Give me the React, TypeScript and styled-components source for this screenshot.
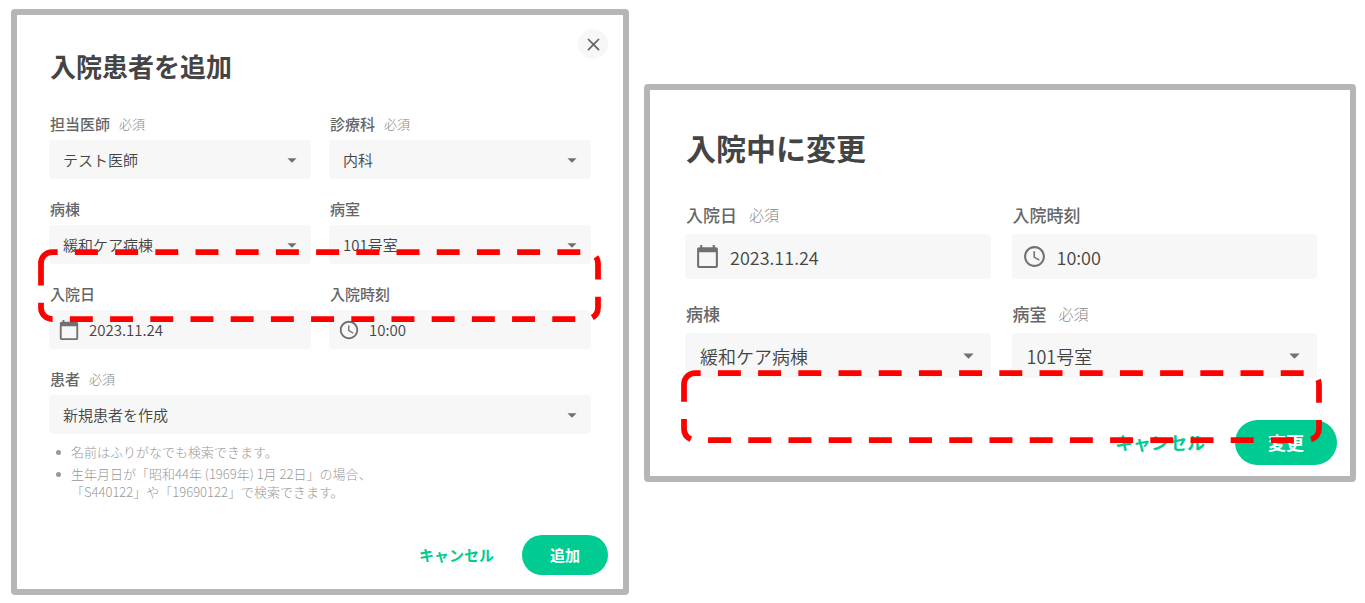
import React, { useId } from "react";
import styled, { createGlobalStyle, css } from "styled-components";
import { MdAccessTime, MdArrowDropDown, MdCalendarToday, MdClose } from "react-icons/md";

const GlobalStyle = createGlobalStyle`
  *, *::before, *::after { box-sizing: border-box; }
  body {
    margin: 0;
    background: #ffffff;
    color: #444444;
    font-family: "Noto Sans CJK JP", "Noto Sans", sans-serif;
  }
  button, input, select { font: inherit; color: inherit; }
`;

type Size = "regular" | "large";

const metrics = {
  regular: {
    title: 26, titleLine: 38, titleGap: 29,
    label: 15, labelLine: 20, labelGap: 6, note: 13, noteGap: 9,
    text: 15, field: 39, inset: 14, iconInset: 9, icon: 22, iconGap: 9, arrowInset: 8,
    rowGap: 20, columnGap: 18,
    button: 40, buttonPad: 28, buttonGap: 28,
    padding: "32px 32px 0",
  },
  large: {
    title: 30, titleLine: 44, titleGap: 34,
    label: 17, labelLine: 24, labelGap: 7, note: 15, noteGap: 12,
    text: 18, field: 45, inset: 15, iconInset: 10, icon: 25, iconGap: 10, arrowInset: 10,
    rowGap: 23, columnGap: 21,
    button: 45, buttonPad: 33, buttonGap: 30,
    padding: "35px 33px 0 35px",
  },
};

interface Sized { $size: Size }

const Page = styled.main`
  display: grid;
  grid-template-columns: 618fr 712fr;
  column-gap: 15px;
  align-items: start;
  padding: 9px 9px 8px 11px;
`;

const Dialog = styled.section<{ $drop?: number }>`
  position: relative;
  margin-top: ${(p) => p.$drop ?? 0}px;
  border: 6px solid #b6b6b6;
  border-radius: 4px;
  background: #ffffff;
`;

const Body = styled.div<Sized>`
  padding: ${(p) => metrics[p.$size].padding};
`;

const Title = styled.h2<Sized>`
  margin: 0 0 ${(p) => metrics[p.$size].titleGap}px;
  padding-left: 1px;
  font-size: ${(p) => metrics[p.$size].title}px;
  line-height: ${(p) => metrics[p.$size].titleLine}px;
  font-weight: 700;
`;

const CloseButton = styled.button`
  position: absolute;
  top: 14px;
  right: 15px;
  display: grid;
  place-items: center;
  width: 30px;
  height: 30px;
  padding: 0;
  border: 0;
  border-radius: 50%;
  background: #f7f7f7;
  color: #666666;
  font-size: 21px;
`;

const Fields = styled.div<Sized>`
  display: grid;
  grid-template-columns: 1fr 1fr;
  gap: ${(p) => metrics[p.$size].rowGap}px ${(p) => metrics[p.$size].columnGap}px;
`;

const Field = styled.div<{ $wide?: boolean }>`
  min-width: 0;
  ${(p) => p.$wide && css`grid-column: 1 / -1;`}
`;

const LabelRow = styled.div<Sized>`
  display: flex;
  align-items: center;
  gap: ${(p) => metrics[p.$size].noteGap}px;
  height: ${(p) => metrics[p.$size].labelLine}px;
  margin-bottom: ${(p) => metrics[p.$size].labelGap}px;
  padding-left: 1px;
`;

const Label = styled.label<Sized>`
  color: #666666;
  font-size: ${(p) => metrics[p.$size].label}px;
  line-height: ${(p) => metrics[p.$size].labelLine}px;
  font-weight: 500;
`;

const Required = styled.span<Sized>`
  color: #888888;
  font-size: ${(p) => metrics[p.$size].note}px;
  line-height: ${(p) => metrics[p.$size].labelLine}px;
  font-weight: 300;
`;

const Control = styled.div<Sized & { $icon?: boolean }>`
  position: relative;
  display: flex;
  align-items: center;
  gap: ${(p) => metrics[p.$size].iconGap}px;
  height: ${(p) => metrics[p.$size].field}px;
  padding-left: ${(p) => (p.$icon ? metrics[p.$size].iconInset : 0)}px;
  border-radius: 4px;
  background: #f7f7f7;
  color: #444444;
  font-size: ${(p) => metrics[p.$size].text}px;
  font-weight: 350;

  svg {
    flex: none;
    width: ${(p) => metrics[p.$size].icon}px;
    height: ${(p) => metrics[p.$size].icon}px;
    color: #707070;
  }
`;

const Select = styled.select<Sized>`
  width: 100%;
  height: 100%;
  padding: 0 40px 0 ${(p) => metrics[p.$size].inset}px;
  border: 0;
  background: transparent;
  appearance: none;
`;

const Arrow = styled(MdArrowDropDown)<Sized>`
  position: absolute;
  right: ${(p) => metrics[p.$size].arrowInset}px;
  pointer-events: none;
`;

const Input = styled.input`
  flex: 1;
  min-width: 0;
  height: 100%;
  padding: 0;
  border: 0;
  background: transparent;
`;

const Hints = styled.ul`
  display: grid;
  gap: 4px;
  margin: 9px 0 0;
  padding: 0;
  list-style: none;
  color: #999999;
  font-size: 13px;
  line-height: 18px;
  font-weight: 300;
`;

const Hint = styled.li`
  display: flex;
  gap: 10px;
  padding-left: 7px;

  &::before {
    content: "";
    flex: none;
    width: 5px;
    height: 5px;
    margin-top: 7px;
    border-radius: 50%;
    background: #999999;
  }
`;

const Footer = styled.footer<Sized>`
  display: flex;
  justify-content: flex-end;
  align-items: center;
  gap: ${(p) => metrics[p.$size].buttonGap}px;
  padding: ${(p) => (p.$size === "regular" ? "34px 15px 14px" : "42px 13px 11px")};
  font-size: ${(p) => metrics[p.$size].text}px;
`;

const TextButton = styled.button<Sized>`
  height: ${(p) => metrics[p.$size].button}px;
  padding: 0 0 2px;
  border: 0;
  background: transparent;
  color: #00cc92;
  font-weight: 700;
`;

const PrimaryButton = styled(TextButton)`
  padding: 0 ${(p) => metrics[p.$size].buttonPad}px 2px;
  border-radius: 23px;
  background: #00cc92;
  color: #ffffff;
`;

const Marker = styled.svg<{ $top: number; $left: number; $right: number }>`
  position: absolute;
  top: ${(p) => p.$top}px;
  left: ${(p) => p.$left}px;
  width: calc(100% - ${(p) => p.$left + p.$right}px);
  pointer-events: none;
`;

/* Dashed outline that starts below its top-left corner and runs clockwise. */
function DashedOutline({ width, top, left, right }: { width: number; top: number; left: number; right: number }) {
  const far = width - 3;
  return (
    <Marker $top={top} $left={left} $right={right} viewBox={`0 0 ${width} 73`} aria-hidden="true">
      <path
        d={`M3 14.2A11.2 11.2 0 0 1 14.2 3H${far - 11.2}A11.2 11.2 0 0 1 ${far} 14.2V58.8A11.2 11.2 0 0 1 ${far - 11.2} 70H14.2A11.2 11.2 0 0 1 3 58.8Z`}
        fill="none"
        stroke="#ff0000"
        strokeWidth="5.75"
        strokeDasharray="22.95 17.25"
      />
    </Marker>
  );
}

interface FieldProps {
  size: Size;
  label: string;
  value: string;
  required?: boolean;
  wide?: boolean;
}

function FieldLabel({ id, size, label, required }: { id: string; size: Size; label: string; required?: boolean }) {
  return (
    <LabelRow $size={size}>
      <Label $size={size} htmlFor={id}>{label}</Label>
      {required && <Required $size={size}>必須</Required>}
    </LabelRow>
  );
}

function SelectField({ size, label, value, required, wide }: FieldProps) {
  const id = useId();
  return (
    <Field $wide={wide}>
      <FieldLabel id={id} size={size} label={label} required={required} />
      <Control $size={size}>
        <Select id={id} $size={size} defaultValue={value}>
          <option>{value}</option>
        </Select>
        <Arrow $size={size} aria-hidden="true" />
      </Control>
    </Field>
  );
}

function IconField({ size, label, value, required, icon }: FieldProps & { icon: React.ReactNode }) {
  const id = useId();
  return (
    <Field>
      <FieldLabel id={id} size={size} label={label} required={required} />
      <Control $size={size} $icon>
        {icon}
        <Input id={id} type="text" defaultValue={value} />
      </Control>
    </Field>
  );
}

export default function App() {
  return (
    <>
      <GlobalStyle />
      <Page>
        <Dialog aria-label="入院患者を追加">
          <CloseButton type="button" aria-label="閉じる"><MdClose /></CloseButton>
          <Body $size="regular">
            <Title $size="regular">入院患者を追加</Title>
            <Fields $size="regular">
              <SelectField size="regular" label="担当医師" value="テスト医師" required />
              <SelectField size="regular" label="診療科" value="内科" required />
              <SelectField size="regular" label="病棟" value="緩和ケア病棟" />
              <SelectField size="regular" label="病室" value="101号室" />
              <IconField size="regular" label="入院日" value="2023.11.24" icon={<MdCalendarToday />} />
              <IconField size="regular" label="入院時刻" value="10:00" icon={<MdAccessTime />} />
              <SelectField size="regular" label="患者" value="新規患者を作成" required wide />
            </Fields>
            <Hints>
              <Hint>名前はふりがなでも検索できます。</Hint>
              <Hint>
                <span>
                  生年月日が「昭和44年 (1969年) 1月 22日」の場合、
                  <br />
                  「S440122」や「19690122」で検索できます。
                </span>
              </Hint>
            </Hints>
          </Body>
          <Footer $size="regular">
            <TextButton type="button" $size="regular">キャンセル</TextButton>
            <PrimaryButton type="button" $size="regular">追加</PrimaryButton>
          </Footer>
          <DashedOutline width={563} top={234} left={21} right={22} />
        </Dialog>

        <Dialog $drop={75} aria-label="入院中に変更">
          <Body $size="large">
            <Title $size="large">入院中に変更</Title>
            <Fields $size="large">
              <IconField size="large" label="入院日" value="2023.11.24" required icon={<MdCalendarToday />} />
              <IconField size="large" label="入院時刻" value="10:00" icon={<MdAccessTime />} />
              <SelectField size="large" label="病棟" value="緩和ケア病棟" />
              <SelectField size="large" label="病室" value="101号室" required />
            </Fields>
          </Body>
          <Footer $size="large">
            <TextButton type="button" $size="large">キャンセル</TextButton>
            <PrimaryButton type="button" $size="large">変更</PrimaryButton>
          </Footer>
          <DashedOutline width={641} top={280} left={31} right={28} />
        </Dialog>
      </Page>
    </>
  );
}
